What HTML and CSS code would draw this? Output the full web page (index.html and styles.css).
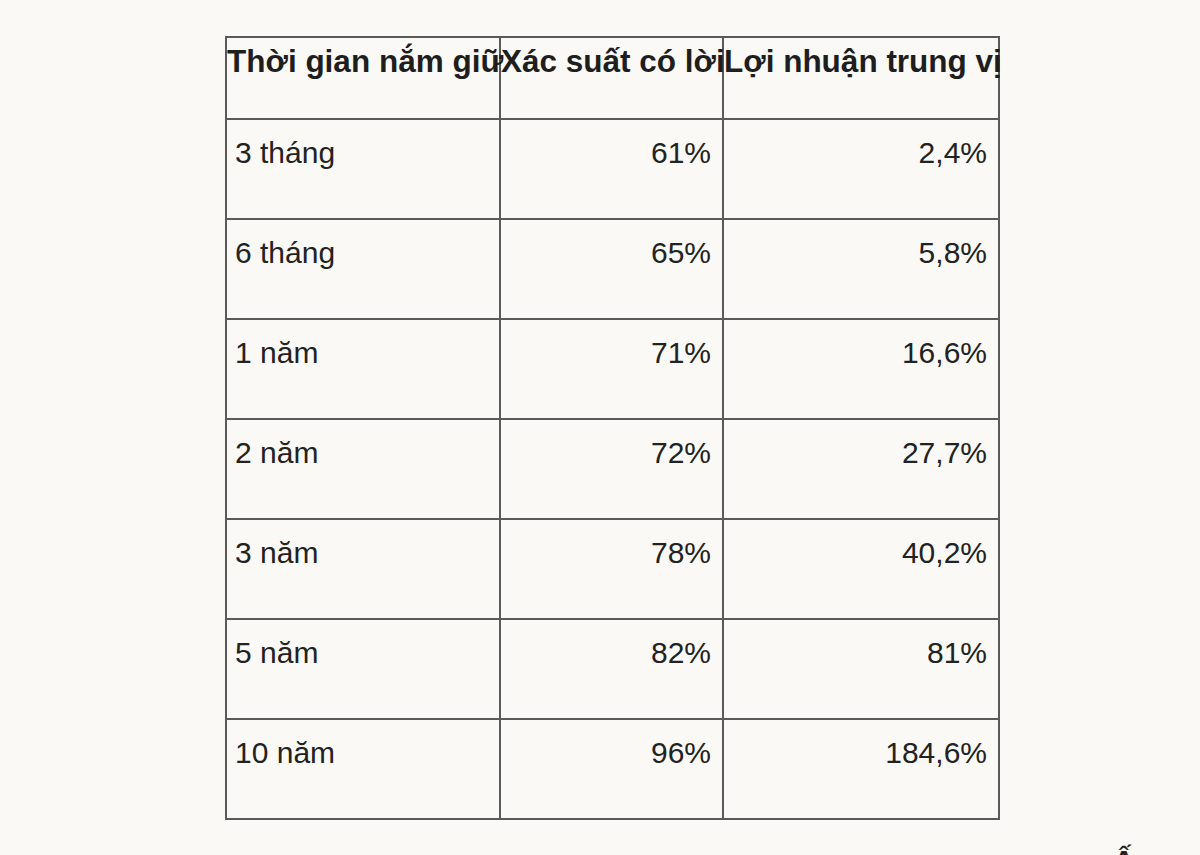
FILE: index.html
```html
<!DOCTYPE html>
<html lang="vi">
<head>
<meta charset="utf-8">
<title>Bảng xác suất có lời</title>
<link rel="stylesheet" href="styles.css">
</head>
<body>
<main class="page">
  <table class="stats">
    <colgroup>
      <col class="c1">
      <col class="c2">
      <col class="c3">
    </colgroup>
    <thead>
      <tr class="head-row">
        <th>Thời gian nắm giữ</th>
        <th>Xác suất có lời</th>
        <th>Lợi nhuận trung vị</th>
      </tr>
    </thead>
    <tbody>
      <tr><td>3 tháng</td><td class="num">61%</td><td class="num">2,4%</td></tr>
      <tr><td>6 tháng</td><td class="num">65%</td><td class="num">5,8%</td></tr>
      <tr><td>1 năm</td><td class="num">71%</td><td class="num">16,6%</td></tr>
      <tr><td>2 năm</td><td class="num">72%</td><td class="num">27,7%</td></tr>
      <tr><td>3 năm</td><td class="num">78%</td><td class="num">40,2%</td></tr>
      <tr><td>5 năm</td><td class="num">82%</td><td class="num">81%</td></tr>
      <tr><td>10 năm</td><td class="num">96%</td><td class="num">184,6%</td></tr>
    </tbody>
  </table>
  <p class="next">Ấ</p>
</main>
</body>
</html>
```

FILE: styles.css
```css
html, body {
  margin: 0;
  padding: 0;
  height: 855px;
  overflow: hidden;
  background: #faf9f6;
}

body {
  font-family: "Liberation Sans", Arial, Helvetica, sans-serif;
  color: #222222;
}

.page {
  padding: 36px 0 0 225px;
}

.stats {
  table-layout: fixed;
  border-collapse: collapse;
  width: 773px;
}

.c1 { width: 274px; }
.c2 { width: 223px; }
.c3 { width: 276px; }

.stats th,
.stats td {
  border: 2px solid #5a5a5a;
  vertical-align: top;
  white-space: nowrap;
  overflow: visible;
}

.head-row {
  height: 82px;
}

.stats th {
  font-size: 31.5px;
  font-weight: bold;
  text-align: center;
  padding: 5px 0 0 0;
  color: #1e1e1e;
}

.stats tbody tr {
  height: 100px;
}

.stats td {
  font-size: 30px;
  padding: 16px 11px 0 8px;
}

.stats td.num {
  text-align: right;
}

.next {
  margin: 24px 0 0 0;
  padding-left: 888px;
  font-size: 30px;
  font-weight: bold;
  line-height: 34px;
}
```
